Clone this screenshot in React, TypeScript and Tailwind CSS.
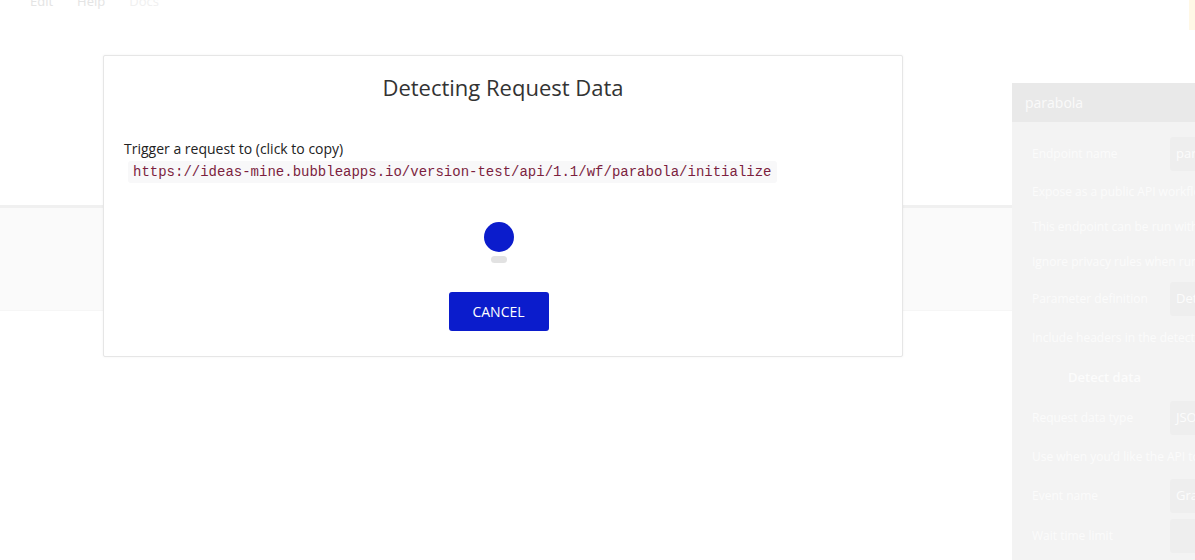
import React from 'react'

const FONT = { fontFamily: '"Open Sans", "Liberation Sans", sans-serif' }
const MONO = { fontFamily: '"Liberation Mono", "Courier New", monospace' }

const URL = 'https://ideas-mine.bubbleapps.io/version-test/api/1.1/wf/parabola/initialize'

type Row = { label: string; value?: string; h: number }

const PANEL_ROWS: Row[] = [
  { label: 'Endpoint name', value: 'parabola', h: 40 },
  { label: 'Expose as a public API workflow', h: 36 },
  { label: 'This endpoint can be run without authentication', h: 34 },
  { label: 'Ignore privacy rules when running the workflow', h: 36 },
  { label: 'Parameter definition', value: 'Detect data', h: 38 },
  { label: 'Include headers in the detected data', h: 40 },
]

const PANEL_ROWS_2: Row[] = [
  { label: 'Request data type', value: 'JSON', h: 40 },
  { label: 'Use when you\u2019d like the API to return data', h: 38 },
  { label: 'Event name', value: 'Gray', h: 40 },
  { label: 'Wait time limit', value: ' ', h: 40 },
]

function PanelRow({ label, value, h }: Row) {
  return (
    <div className="flex items-center pl-[20px] gap-2 whitespace-nowrap" style={{ height: h }}>
      <div className={value ? 'w-[130px] shrink-0 text-[12px] text-[#fbfbfb] overflow-hidden' : 'shrink-0 text-[12px] text-[#fbfbfb]'}>
        {label}
      </div>
      {value && (
        <div className="flex-1 h-[34px] bg-[#eeeeee] rounded-l-[3px] px-[6px] flex items-center text-[13px] text-[#fcfcfc] overflow-hidden">
          {value}
        </div>
      )}
    </div>
  )
}

export default function App() {
  return (
    <div className="relative w-[1195px] h-[560px] overflow-hidden bg-white" style={FONT}>
      {/* faded editor underneath */}
      <div className="flex h-full">
        <div className="flex-1 flex flex-col">
          <div className="flex gap-[24px] pl-[30px] -mt-[8px] h-[16px] text-[13px] text-[#e4e4e4]">
            <span>Edit</span>
            <span>Help</span>
            <span className="text-[#f0f0f0]">Docs</span>
          </div>
          <div className="h-[197px]" />
          <div className="h-[3px] bg-[#f0f0f0]" />
          <div className="h-[103px] bg-[#fafafa] border-b border-[#f6f6f6]" />
        </div>
        <div className="w-[183px] flex flex-col">
          <div className="h-[83px] flex justify-end">
            <div className="w-[6px] h-[30px] bg-[#fff8e6]" />
          </div>
          <div className="flex-1 bg-[#f3f3f3] overflow-hidden">
            <div className="h-[39px] bg-[#e9e9e9] flex items-center pl-[13px] text-[14px] text-[#fafafa]">parabola</div>
            <div className="pt-[12px]">
              {PANEL_ROWS.map((r) => (
                <PanelRow key={r.label} {...r} />
              ))}
              <div className="h-[40px] flex items-center pl-[56px] text-[13px] font-semibold text-[#fcfcfc]">Detect data</div>
              {PANEL_ROWS_2.map((r) => (
                <PanelRow key={r.label} {...r} />
              ))}
            </div>
          </div>
        </div>
      </div>

      {/* modal */}
      <div className="absolute left-[103px] top-[55px] w-[800px] h-[302px] bg-white border border-[#e6e6e6] rounded-[2px] shadow-[0_0_3px_rgba(0,0,0,0.05)] flex flex-col">
        <div className="h-[63px] flex items-center justify-center text-[22px] text-[#333333]">
          Detecting Request Data
        </div>
        <div className="px-[20px] pt-[20px]">
          <div className="text-[14px] text-[#222222] leading-[20px]">Trigger a request to (click to copy)</div>
          <div className="mt-[2px] ml-[4px] w-fit bg-[#f8f8f9] text-[#7c1f3f] text-[14px] leading-[22px] px-[5px] rounded-[3px]" style={MONO}>
            {URL}
          </div>
        </div>
        <div className="flex flex-col items-center mt-[39px] pr-[9px]">
          <div className="w-[30px] h-[30px] rounded-full bg-[#0b1ccc]" />
          <div className="mt-[4px] w-[16px] h-[7px] rounded-full bg-[#e2e2e2]" />
          <button className="mt-[29px] w-[100px] h-[39px] rounded-[3px] bg-[#0b1ccc] text-white text-[14px]" style={FONT}>
            CANCEL
          </button>
        </div>
      </div>
    </div>
  )
}
